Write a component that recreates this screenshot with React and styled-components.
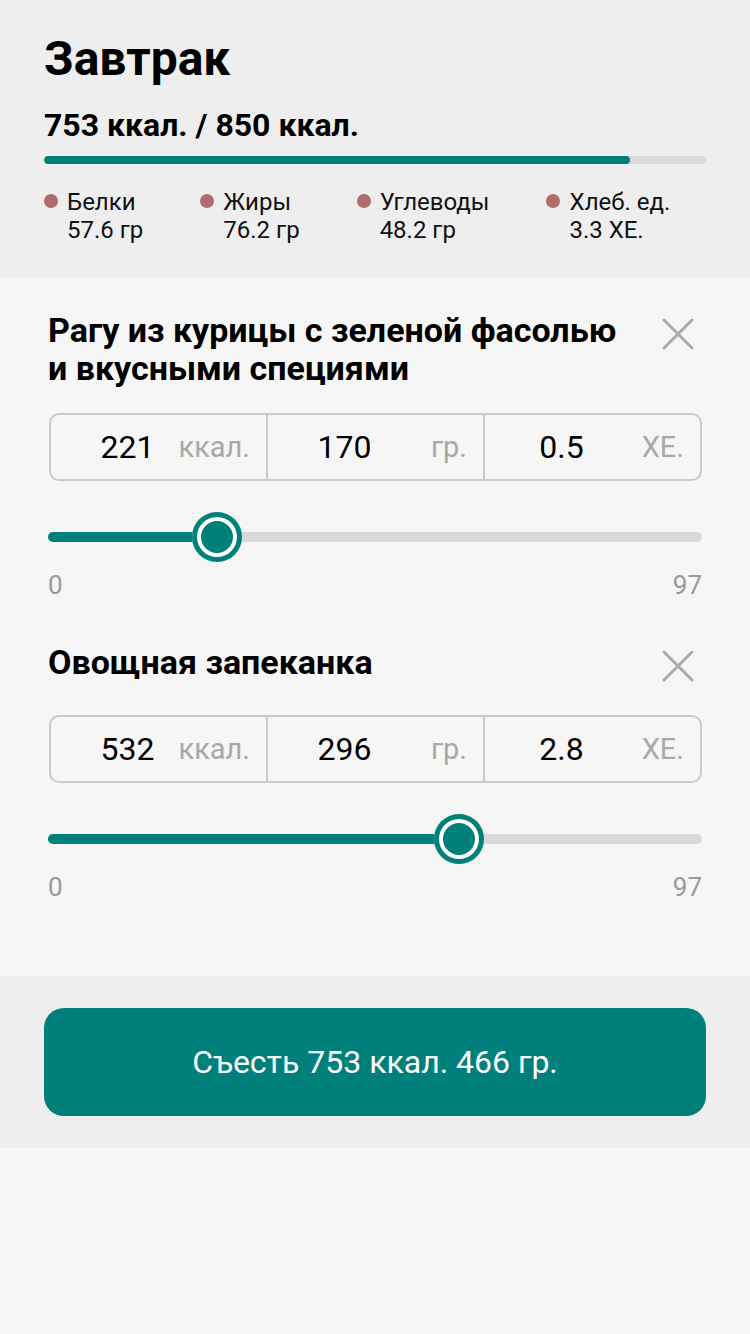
import React from "react";
import styled, { createGlobalStyle } from "styled-components";

const TEAL = "#00807a";

const Global = createGlobalStyle`
  html, body { margin: 0; padding: 0; }
  body {
    background: #f6f6f6;
    font-family: Roboto, "Noto Sans", "Liberation Sans", sans-serif;
    color: #000;
    -webkit-font-smoothing: antialiased;
  }
  * { box-sizing: border-box; }
`;

const Page = styled.div`
  width: 750px;
  min-height: 1334px;
  background: #f6f6f6;
`;

const Header = styled.header`
  background: #eeeeee;
  padding: 31px 44px 34px 44px;
`;

const Title = styled.h1`
  margin: 0;
  font-size: 48px;
  line-height: 56px;
  font-weight: 700;
`;

const Total = styled.div`
  margin-top: 19px;
  font-size: 32px;
  line-height: 38px;
  font-weight: 700;
`;

const Progress = styled.div`
  margin-top: 12px;
  height: 8px;
  border-radius: 4px;
  background: #d9d9d9;
  overflow: hidden;
`;

const ProgressFill = styled.div`
  height: 100%;
  border-radius: 4px;
  background: ${TEAL};
`;

const Macros = styled.div`
  margin-top: 24px;
  display: flex;
  gap: 57px;
`;

const Macro = styled.div`
  display: flex;
  align-items: flex-start;
  gap: 9px;
`;

const Dot = styled.span`
  flex: none;
  width: 14px;
  height: 14px;
  margin-top: 6px;
  border-radius: 50%;
  background: #b06b6b;
`;

const MacroText = styled.div`
  font-size: 24px;
  line-height: 28px;
  color: #111;
`;

const Body = styled.main`
  padding: 33px 48px 74px 48px;
  display: flex;
  flex-direction: column;
  gap: 43px;
`;

const Card = styled.section`
  display: flex;
  flex-direction: column;
`;

const TitleRow = styled.div`
  display: flex;
  align-items: flex-start;
  gap: 24px;
`;

const DishName = styled.h2`
  flex: 1;
  margin: 0;
  font-size: 34px;
  line-height: 38px;
  font-weight: 700;
`;

const CloseButton = styled.button`
  flex: none;
  width: 48px;
  height: 46px;
  padding: 0;
  border: 0;
  background: transparent;
  display: flex;
  align-items: center;
  justify-content: center;
  color: #aaaaaa;
`;

const Inputs = styled.div`
  margin-top: 26px;
  margin-left: 1px;
  height: 68px;
  display: flex;
  border: 2px solid #c9c9c9;
  border-radius: 10px;
`;

const Cell = styled.div`
  flex: 1 1 0;
  min-width: 0;
  display: grid;
  grid-template-areas: "field";
  align-items: center;
  padding-right: 16px;
  & + & {
    border-left: 2px solid #c9c9c9;
  }
`;

const Value = styled.span`
  grid-area: field;
  justify-self: start;
  width: 153px;
  text-align: center;
  font-size: 32px;
  color: #000;
`;

const Unit = styled.span`
  grid-area: field;
  justify-self: end;
  font-size: 29px;
  color: #a8a8a8;
`;

const SliderBox = styled.div`
  margin-top: 31px;
  height: 50px;
  display: flex;
  align-items: center;
`;

const Track = styled.div`
  position: relative;
  flex: 1;
  height: 10px;
  border-radius: 5px;
  background: #d9d9d9;
`;

const TrackFill = styled.div`
  height: 100%;
  border-radius: 5px;
  background: ${TEAL};
`;

const Thumb = styled.div`
  position: absolute;
  top: 50%;
  width: 50px;
  height: 50px;
  margin-left: -25px;
  margin-top: -25px;
  border-radius: 50%;
  background: ${TEAL};
  box-shadow: inset 0 0 0 5px ${TEAL}, inset 0 0 0 9px #ffffff;
`;

const Range = styled.div`
  margin-top: 8px;
  display: flex;
  justify-content: space-between;
  font-size: 26px;
  line-height: 30px;
  color: #9a9a9a;
`;

const Footer = styled.footer`
  background: #eeeeee;
  padding: 32px 44px;
`;

const EatButton = styled.button`
  width: 100%;
  height: 108px;
  border: 0;
  border-radius: 20px;
  background: ${TEAL};
  color: #ffffff;
  font-family: Roboto, "Noto Sans", "Liberation Sans", sans-serif;
  font-size: 32px;
  font-weight: 400;
`;

const CloseIcon = () => (
  <svg width="32" height="32" viewBox="0 0 32 32" fill="none">
    <path d="M2 2 L30 30 M30 2 L2 30" stroke="currentColor" strokeWidth="3" strokeLinecap="round" />
  </svg>
);

const dishes = [
  { name: "Рагу из курицы с зеленой фасолью и вкусными специями", kcal: 221, gr: 170, xe: "0.5", value: 25, max: 97 },
  { name: "Овощная запеканка", kcal: 532, gr: 296, xe: "2.8", value: 61, max: 97 },
];

const macros = [
  ["Белки", "57.6 гр"],
  ["Жиры", "76.2 гр"],
  ["Углеводы", "48.2 гр"],
  ["Хлеб. ед.", "3.3 ХЕ."],
];

function Dish({ d }) {
  const pct = (d.value / d.max) * 100;
  return (
    <Card>
      <TitleRow>
        <DishName>{d.name}</DishName>
        <CloseButton aria-label="Удалить">
          <CloseIcon />
        </CloseButton>
      </TitleRow>
      <Inputs>
        <Cell>
          <Value>{d.kcal}</Value>
          <Unit>ккал.</Unit>
        </Cell>
        <Cell>
          <Value>{d.gr}</Value>
          <Unit>гр.</Unit>
        </Cell>
        <Cell>
          <Value>{d.xe}</Value>
          <Unit>ХЕ.</Unit>
        </Cell>
      </Inputs>
      <SliderBox>
        <Track>
          <TrackFill style={{ width: `${pct}%` }} />
          <Thumb style={{ left: `${pct}%` }} />
        </Track>
      </SliderBox>
      <Range>
        <span>0</span>
        <span>{d.max}</span>
      </Range>
    </Card>
  );
}

export default function App() {
  const eaten = 753;
  const goal = 850;
  return (
    <Page>
      <Global />
      <Header>
        <Title>Завтрак</Title>
        <Total>
          {eaten} ккал. / {goal} ккал.
        </Total>
        <Progress>
          <ProgressFill style={{ width: `${(eaten / goal) * 100}%` }} />
        </Progress>
        <Macros>
          {macros.map(([label, val]) => (
            <Macro key={label}>
              <Dot />
              <MacroText>
                {label}
                <br />
                {val}
              </MacroText>
            </Macro>
          ))}
        </Macros>
      </Header>
      <Body>
        {dishes.map((d) => (
          <Dish key={d.name} d={d} />
        ))}
      </Body>
      <Footer>
        <EatButton>Съесть 753 ккал. 466 гр.</EatButton>
      </Footer>
    </Page>
  );
}
